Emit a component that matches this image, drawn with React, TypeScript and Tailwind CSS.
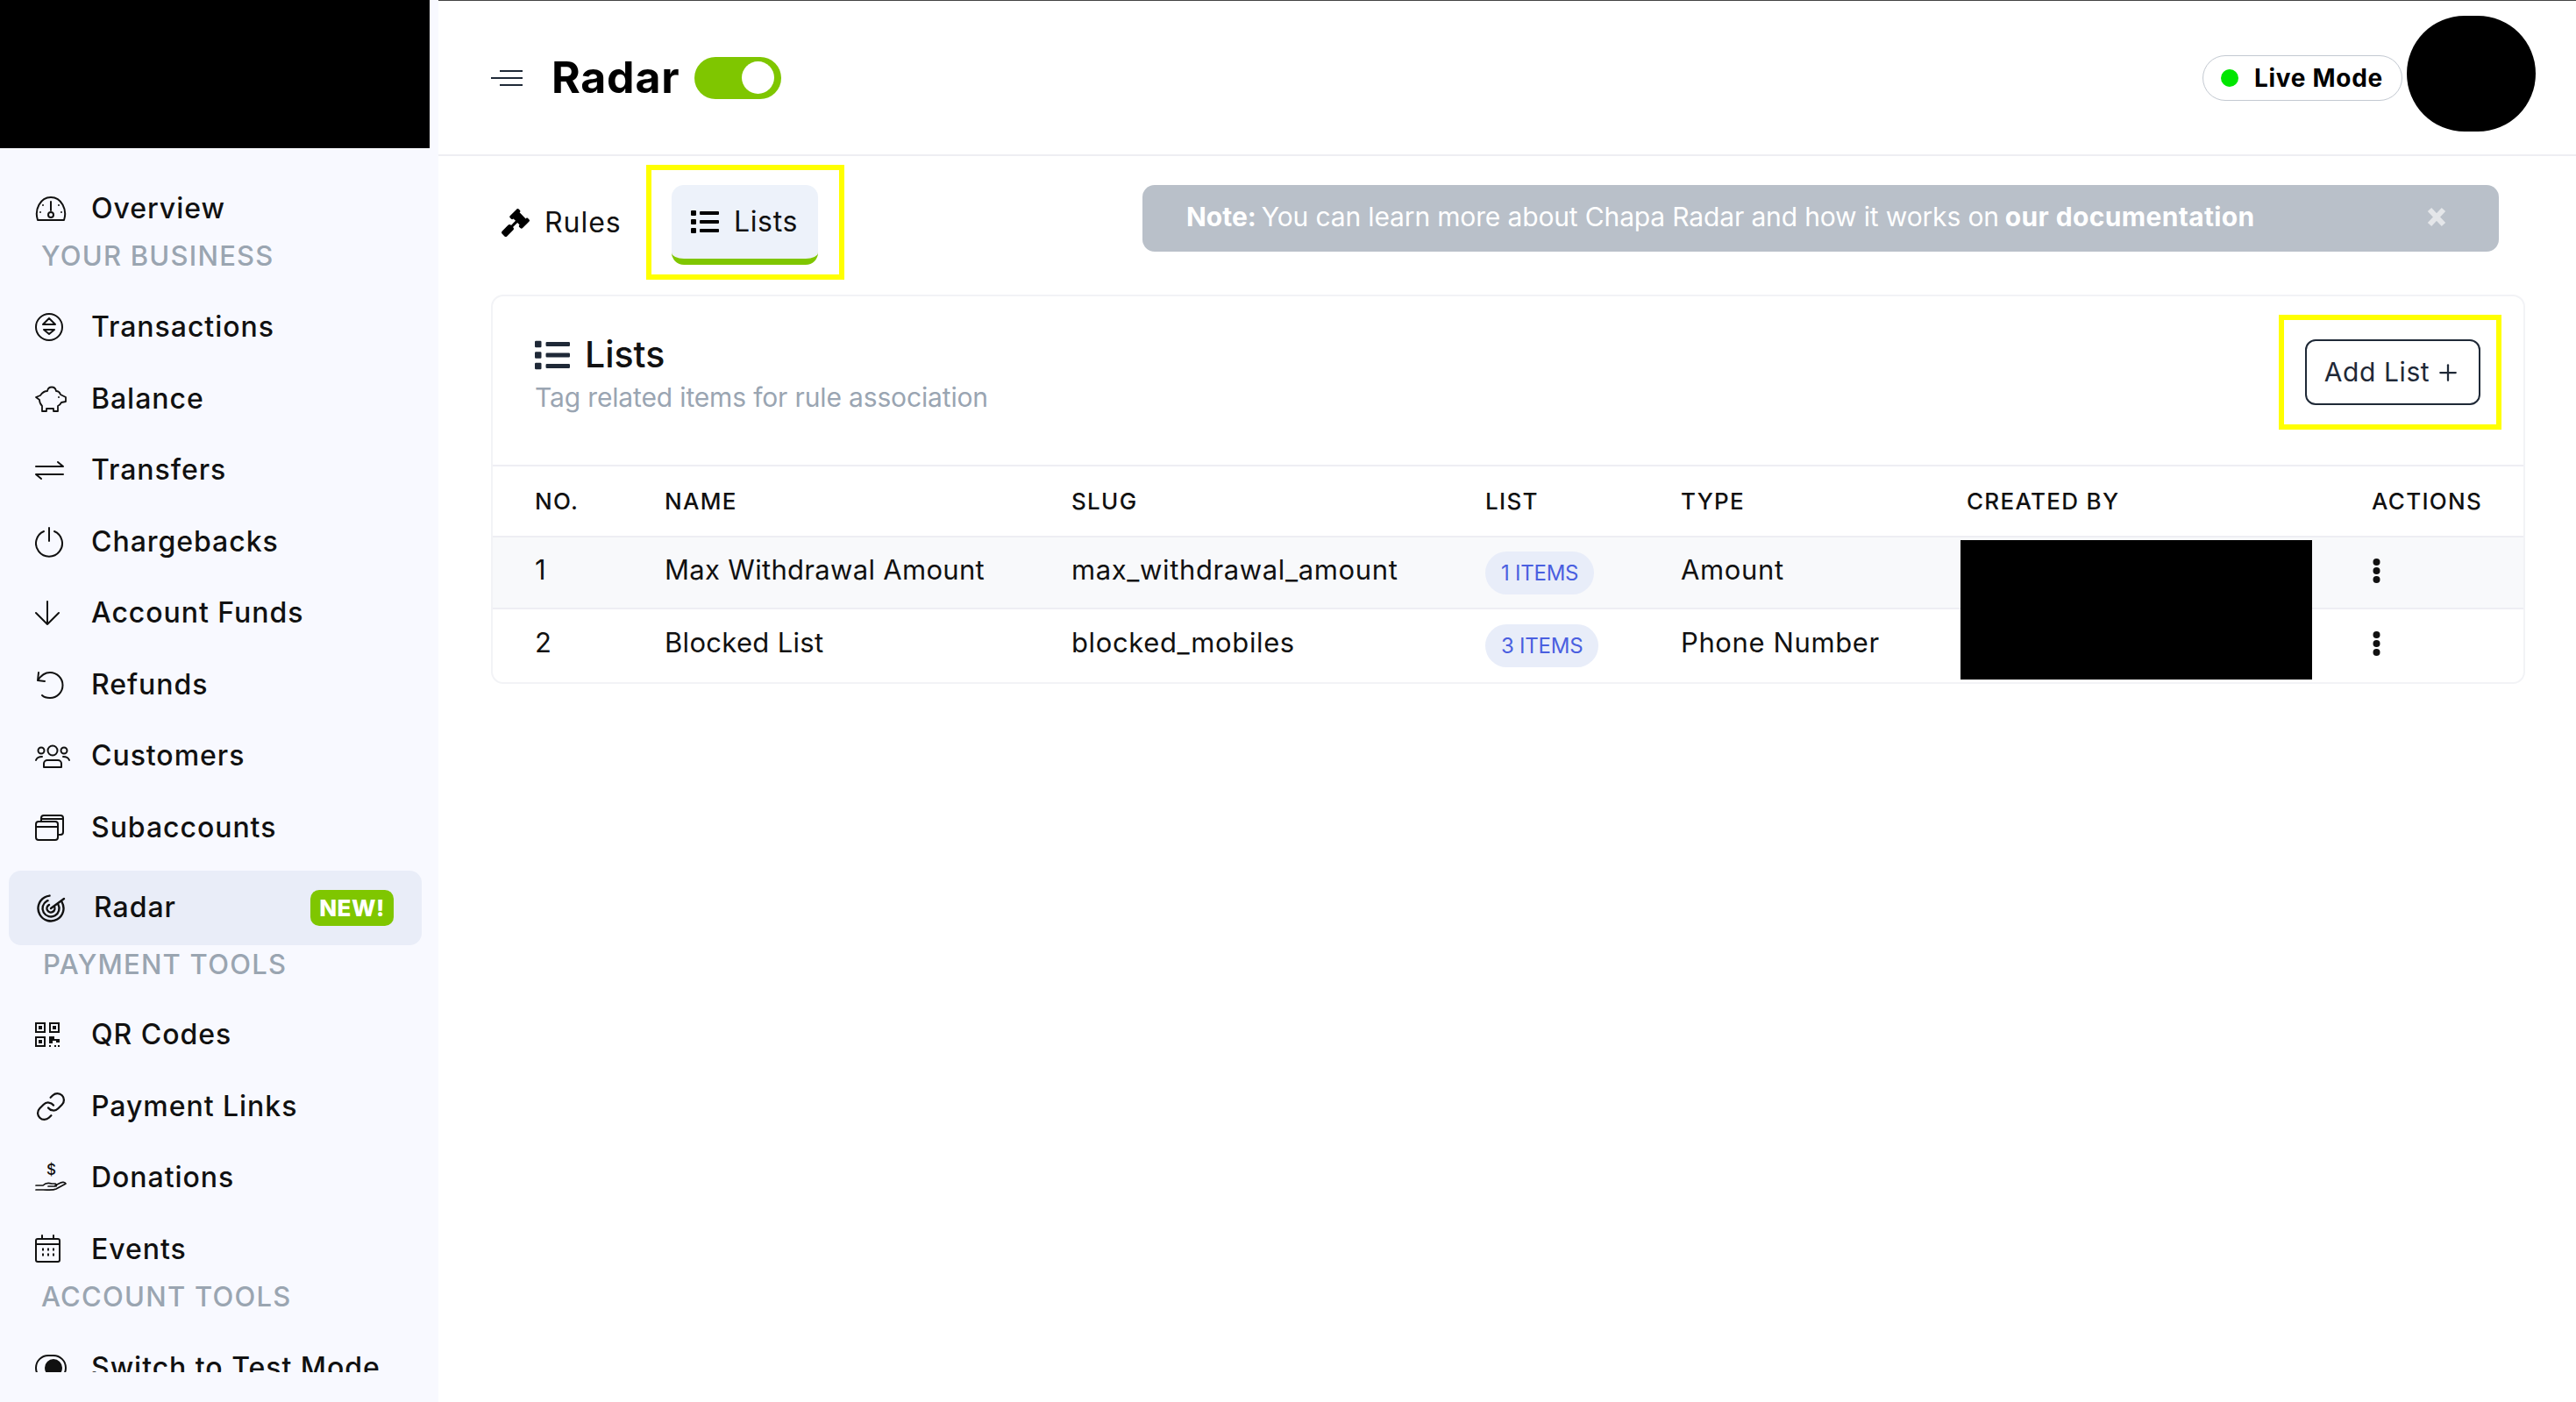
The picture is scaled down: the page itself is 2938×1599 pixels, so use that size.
import type { ReactNode } from 'react';
import { FaGavel, FaList } from 'react-icons/fa';
import { Link, Plus } from 'lucide-react';

const FONT = "font-['Inter','Liberation_Sans',sans-serif]";

const Line = ({ children, w = 36 }: { children: ReactNode; w?: number }) => (
  <svg width={w} height="36" viewBox={`0 0 ${w} 36`} fill="none" stroke="currentColor" strokeWidth="2" strokeLinecap="round" strokeLinejoin="round">
    {children}
  </svg>
);

const GaugeIcon = () => (
  <Line>
    <path d="M3 31 C-1 19 6 5 18 5 C30 5 37 19 33 31 Z" />
    <path d="M18 10 V20" />
    <circle cx="18" cy="25" r="3" />
    <path d="M9 14 v.1 M27 14 v.1 M6 22 v.1 M30 22 v.1" />
  </Line>
);
const TransactionsIcon = () => (
  <Line>
    <circle cx="16" cy="18" r="15" />
    <path d="M16 8 L9 15 H23 Z M10 21 H22 L16 26 Z" />
  </Line>
);
const PiggyIcon = () => (
  <Line>
    <path d="M6 14 C8 11 11 9 14 9 C15 3 23 3 24 9 C26 9 28 10 29 13 L35 16 V21 L30 22 C29 24 28 25 26 26 V32 H21 V29 H13 V32 H8 V26 C6 24 5 21 5 19 L1 16 Z" strokeWidth="1.8" />
    <path d="M27 16 v.1" />
  </Line>
);
const TransfersIcon = () => (
  <Line>
    <path d="M1 14 H32 L26 9 M32 23 H1 L7 28" />
  </Line>
);
const PowerIcon = () => (
  <Line>
    <path d="M10 6 A15 15 0 1 0 22 6 M16 2 V17" />
  </Line>
);
const ArrowIcon = () => (
  <Line>
    <path d="M14 5 V31 M1 18 L14 31 L27 18" />
  </Line>
);
const RefundIcon = () => (
  <Line>
    <path d="M4 4 L3 13 L11 14 M3 13 C7 7 12 4 17 4 A14.5 14.5 0 0 1 17 33 C13 33 10 32 8 30" />
  </Line>
);
const CustomersIcon = () => (
  <Line w={40}>
    <circle cx="20" cy="12" r="5.5" />
    <circle cx="7" cy="12" r="3.5" />
    <circle cx="33" cy="12" r="3.5" />
    <path d="M10 31 V27 A4 4 0 0 1 14 23 H26 A4 4 0 0 1 30 27 V31 Z M1 23 C2 20 5 19 8 19 M39 23 C38 20 35 19 32 19" />
  </Line>
);
const CardsIcon = () => (
  <Line>
    <rect x="1" y="11" width="25" height="21" rx="3" />
    <path d="M1 17 H26 M7 11 V7 A3 3 0 0 1 10 4 H29 A3 3 0 0 1 32 7 V23 A3 3 0 0 1 29 26 H26 M7 8 H32" />
  </Line>
);
const RadarIcon = () => (
  <Line>
    <circle cx="16" cy="19" r="14.5" strokeDasharray="74 17" transform="rotate(-30 16 19)" strokeWidth="2.4" />
    <circle cx="16" cy="19" r="9.5" strokeDasharray="46 14" transform="rotate(-30 16 19)" strokeWidth="2.4" />
    <circle cx="16" cy="19" r="4.5" strokeDasharray="21 8" transform="rotate(-30 16 19)" strokeWidth="2.4" />
    <path d="M16 19 L31 8" strokeWidth="2.4" />
  </Line>
);
const QrIcon = () => (
  <svg width="28" height="28" viewBox="0 0 28 28" fill="currentColor">
    <path fillRule="evenodd" d="M0 0 H12 V12 H0 Z M2 2 V10 H10 V2 Z M4 4 H8 V8 H4 Z M16 0 H28 V12 H16 Z M18 2 V10 H26 V2 Z M20 4 H24 V8 H20 Z M0 16 H12 V28 H0 Z M2 18 V26 H10 V18 Z M4 20 H8 V24 H4 Z" />
    <path d="M16 16 H22 V19 H28 V23 H24 V21 H20 V24 H16 Z M16 26 H18 V28 H16 Z M22 26 H24 V28 H22 Z M26 26 H28 V28 H26 Z" />
  </svg>
);
const DonationIcon = () => (
  <Line>
    <text x="19" y="15" fontSize="17" fontWeight="500" textAnchor="middle" fill="currentColor" stroke="none" fontFamily="Inter, sans-serif">$</text>
    <path d="M1 32 H9 C15 32 20 33 24 31 L35 25 C34 23 31 23 29 24 L23 27 M1 27 H9 C12 24 16 24 19 25 H23 C25 26 25 28 23 28 H15" strokeWidth="1.7" />
  </Line>
);
const CalendarIcon = () => (
  <Line>
    <rect x="1" y="6" width="27" height="26" rx="2" />
    <path d="M1 12 H28 M8 2 V6 M21 2 V6" />
    <path d="M8 18 H10 M14 18 H16 M20 18 H22 M8 24 H10 M14 24 H16 M20 24 H22" strokeWidth="3" strokeLinecap="butt" />
  </Line>
);
const SwitchIcon = () => (
  <Line>
    <rect x="1" y="4" width="34" height="28" rx="14" />
    <circle cx="21" cy="18" r="9" fill="currentColor" />
  </Line>
);

const NavItem = ({ icon, label }: { icon: ReactNode; label: string }) => (
  <div className="flex h-[81.5px] items-center pl-[40px] text-[32px] font-medium tracking-[0.03em] whitespace-nowrap text-[#111]">
    <span className="flex w-[64px] shrink-0 items-center">{icon}</span>
    {label}
  </div>
);

const SectionLabel = ({ children, className }: { children: string; className: string }) => (
  <div className={`pl-[47px] text-[31px] leading-[26px] font-medium tracking-[0.04em] text-[#9aa5b1] ${className}`}>{children}</div>
);

const Sidebar = () => (
  <aside className="h-full w-[500px] shrink-0 bg-[#f8f9ff]">
    <div className="h-[169px] w-[490px] bg-black" />
    <nav className="h-[1396px] overflow-hidden pt-[28px]">
      <NavItem icon={<GaugeIcon />} label="Overview" />
      <SectionLabel className="h-[54px]">YOUR BUSINESS</SectionLabel>
      <NavItem icon={<TransactionsIcon />} label="Transactions" />
      <NavItem icon={<PiggyIcon />} label="Balance" />
      <NavItem icon={<TransfersIcon />} label="Transfers" />
      <NavItem icon={<PowerIcon />} label="Chargebacks" />
      <NavItem icon={<ArrowIcon />} label="Account Funds" />
      <NavItem icon={<RefundIcon />} label="Refunds" />
      <NavItem icon={<CustomersIcon />} label="Customers" />
      <NavItem icon={<CardsIcon />} label="Subaccounts" />
      <div className="mt-[8px] ml-[10px] flex h-[85px] w-[471px] items-center rounded-[14px] bg-[#e9edf8] pr-[32px] pl-[32px] text-[32px] font-medium tracking-[0.03em] text-[#111]">
        <span className="flex w-[65px] shrink-0 items-center"><RadarIcon /></span>
        Radar
        <span className="ml-auto flex h-[41px] w-[95px] items-center justify-center rounded-[10px] bg-[#7fc600] text-[26px] font-extrabold tracking-[0.02em] text-white">NEW!</span>
      </div>
      <SectionLabel className="h-[62px] pt-[9px] !pl-[49px]">PAYMENT TOOLS</SectionLabel>
      <NavItem icon={<QrIcon />} label="QR Codes" />
      <NavItem icon={<Link size={36} strokeWidth={1.5} />} label="Payment Links" />
      <NavItem icon={<DonationIcon />} label="Donations" />
      <NavItem icon={<CalendarIcon />} label="Events" />
      <SectionLabel className="h-[54px]">ACCOUNT TOOLS</SectionLabel>
      <NavItem icon={<SwitchIcon />} label="Switch to Test Mode" />
    </nav>
  </aside>
);

const Header = () => (
  <header className="flex h-[178px] items-center border-t border-b-2 border-t-[#444] border-b-[#eeeef3] pr-[46px] pl-[60px]">
    <svg width="36" height="20" viewBox="0 0 36 20" stroke="#1f2937" strokeWidth="2">
      <path d="M10 2 H36 M0 10 H36 M10 18 H36" />
    </svg>
    <h1 className="ml-[33px] text-[50px] font-bold tracking-[0.015em] text-black">Radar</h1>
    <div className="ml-[17px] flex h-[48px] w-[99px] items-center justify-end rounded-full bg-[#7fc600] pr-[8px]">
      <span className="h-[37px] w-[37px] rounded-full bg-white" />
    </div>
    <div className="ml-auto flex h-[52px] w-[228px] items-center rounded-full border border-[#c3c9d1] pl-[20px] text-[28px] font-bold tracking-[0.025em] whitespace-nowrap text-black">
      <span className="mr-[18px] h-[20px] w-[20px] rounded-full bg-[#00e600]" />
      Live Mode
    </div>
    <div className="mb-[10px] ml-[5px] h-[132px] w-[147px] rounded-full bg-black" />
  </header>
);

const TabsRow = () => (
  <div className="flex h-[158px] pt-[10px] pl-[72px]">
    <div className="flex h-[131px] w-[137px] items-center gap-[17px] text-[32px] tracking-[0.03em] text-[#111]">
      <FaGavel size={32} className="shrink-0 text-black" />
      Rules
    </div>
    <div className="ml-[28px] h-[131px] w-[226px] border-[6px] border-[#ffff00] pt-[17px] pl-[23px]">
      <div className="flex h-[91px] w-[167px] items-center gap-[17px] rounded-[14px] border-b-[7px] border-[#7fc600] bg-[#edf2fa] pl-[22px] text-[32px] tracking-[0.02em] text-[#111]">
        <FaList size={32} className="shrink-0 text-black" />
        Lists
      </div>
    </div>
    <div className="mt-[23px] ml-[340px] flex h-[76px] w-[1547px] items-center rounded-[14px] bg-[#b9c0c9] pr-[60px] pb-[4px] pl-[50px] text-[30px] whitespace-nowrap text-white">
      <span className="font-bold">Note:</span>
      <span className="ml-[6px] tracking-[-0.005em]">You can learn more about Chapa Radar and how it works on</span>
      <span className="ml-[7px] font-bold tracking-[0.012em]">our documentation</span>
      <svg width="22" height="23" viewBox="0 0 22 23" stroke="#e4e6e9" strokeWidth="6" className="ml-auto">
        <path d="M3 3 L19 20 M19 3 L3 20" />
      </svg>
    </div>
  </div>
);

const COLS = 'grid grid-cols-[196px_464px_472px_223px_324px_464px_1fr] items-center';

const HeadRow = () => (
  <div className={`${COLS} h-[83px] border-t-2 border-b-2 border-[#eeeef3] text-[26px] font-medium tracking-[0.05em] text-[#111]`}>
    <div className="pl-[48px]">NO.</div>
    <div>NAME</div>
    <div>SLUG</div>
    <div>LIST</div>
    <div>TYPE</div>
    <div className="pl-[2px]">CREATED BY</div>
    <div>ACTIONS</div>
  </div>
);

const Row = ({ no, name, slug, count, type, striped }: { no: string; name: string; slug: string; count: string; type: string; striped?: boolean }) => (
  <div className={`${COLS} h-[82px] text-[31px] tracking-[0.02em] text-[#111] ${striped ? 'border-b-2 border-[#eeeef3] bg-[#f8f9fb]' : ''}`}>
    <div className="pb-[5px] pl-[48px]">{no}</div>
    <div className="pb-[5px] tracking-[0.01em]">{name}</div>
    <div className="pb-[5px]">{slug}</div>
    <div>
      <span className="inline-flex h-[49px] items-center rounded-full bg-[#e8edf9] px-[18px] text-[24px] tracking-[-0.01em] text-[#4a5fe0]">{count} ITEMS</span>
    </div>
    <div className="pb-[5px]">{type}</div>
    <div />
    <div className="pb-[5px] pl-[1px]">
      <svg width="9" height="28" viewBox="0 0 9 28" fill="#111">
        <circle cx="4.5" cy="4" r="4" />
        <circle cx="4.5" cy="14" r="4" />
        <circle cx="4.5" cy="24" r="4" />
      </svg>
    </div>
  </div>
);

const ListsCard = () => (
  <section className="ml-[60px] h-[444px] w-[2320px] rounded-[14px] border-2 border-[#f2f3f6]">
    <div className="flex h-[192px] justify-between pt-[21px] pr-[25px]">
      <div className="pt-[22px] pl-[48px]">
        <div className="flex h-[48px] items-center gap-[17px] text-[41px] font-medium text-[#111]">
          <FaList size={40} className="text-[#1f2937]" />
          Lists
        </div>
        <div className="text-[30px] leading-[48px] tracking-[-0.005em] text-[#9aa5b2]">Tag related items for rule association</div>
      </div>
      <div className="h-[131px] w-[254px] border-[6px] border-[#ffff00] pt-[22px] pl-[24px]">
        <button className="flex h-[75px] w-[200px] items-center justify-center gap-[6px] rounded-[12px] border-2 border-[#1f2937] text-[30px] tracking-[0.02em] text-[#1f2937]">
          Add List
          <Plus size={30} strokeWidth={1.8} />
        </button>
      </div>
    </div>
    <div className="relative">
      <HeadRow />
      <Row no="1" name="Max Withdrawal Amount" slug="max_withdrawal_amount" count="1" type="Amount" striped />
      <Row no="2" name="Blocked List" slug="blocked_mobiles" count="3" type="Phone Number" />
      <div className="absolute top-[86px] left-[1674px] h-[159px] w-[401px] bg-black" />
    </div>
  </section>
);

export default function App() {
  return (
    <div className={`flex h-[1599px] w-full overflow-hidden bg-white ${FONT}`}>
      <Sidebar />
      <main className="min-w-0 flex-1">
        <Header />
        <TabsRow />
        <ListsCard />
      </main>
    </div>
  );
}
